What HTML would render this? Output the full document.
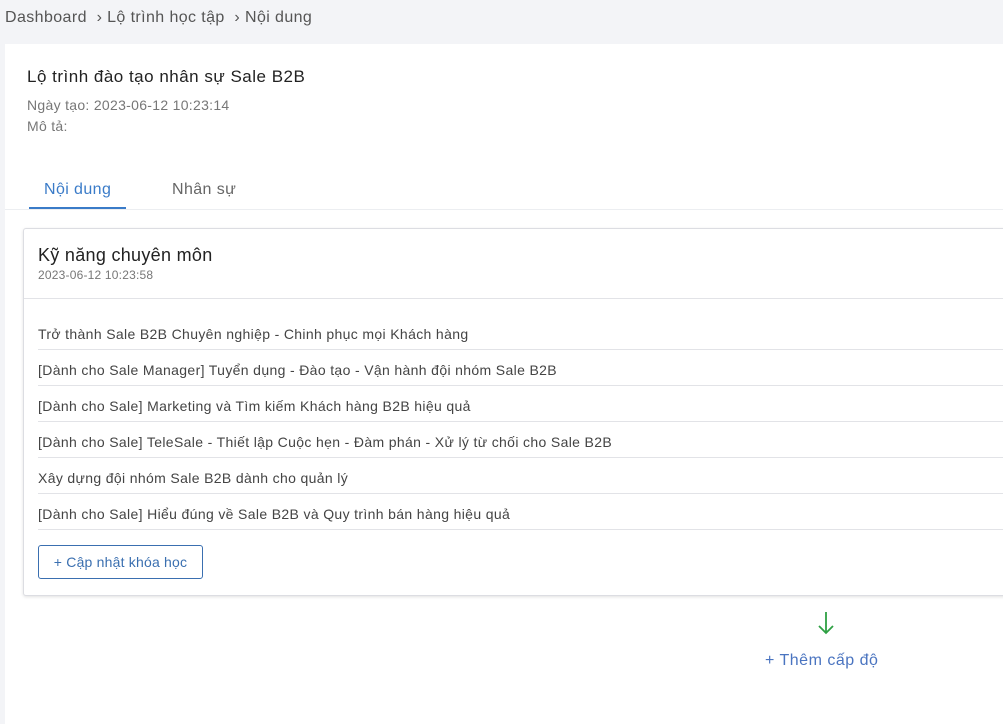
<!DOCTYPE html>
<html><head><meta charset="utf-8"><style>
body{margin:0;width:1003px;height:707px;overflow:hidden;background:#f3f4f7;font-family:"Liberation Sans","Noto Sans CJK SC",sans-serif;color:#333;position:relative}
.a{position:absolute;white-space:nowrap}
.bc{left:5px;top:9px;font-size:16px;color:#555;letter-spacing:0.4px}
.main{left:5px;top:44px;width:1010px;height:680px;background:#fff}
.inner{left:23px;top:228px;width:990px;height:366px;background:#fff;border:1px solid #dcdde2;border-radius:3px;box-shadow:0 1px 3px rgba(0,0,0,.12)}
.row{left:38px;font-size:14px;color:#444;letter-spacing:0.35px}
.ln{left:38px;width:980px;height:1px;background:#e2e3e7}
</style></head><body>
<div class="a bc">Dashboard &nbsp;›&nbsp;Lộ trình học tập &nbsp;›&nbsp;Nội dung</div>
<div class="a main"></div>
<div class="a" style="left:27px;top:67px;font-size:17px;color:#222;letter-spacing:0.5px">Lộ trình đào tạo nhân sự Sale B2B</div>
<div class="a" style="left:27px;top:97px;font-size:14px;color:#777;letter-spacing:0.3px">Ngày tạo: 2023-06-12 10:23:14</div>
<div class="a" style="left:27px;top:118px;font-size:14px;color:#777;letter-spacing:0.3px">Mô tả:</div>
<div class="a" style="left:44px;top:181px;font-size:16px;color:#3a7bc8;letter-spacing:0.4px">Nội dung</div>
<div class="a" style="left:29px;top:207px;width:97px;height:2px;background:#3a7bc8"></div>
<div class="a" style="left:172px;top:181px;font-size:16px;color:#666;letter-spacing:0.4px">Nhân sự</div>
<div class="a" style="left:5px;top:209px;width:1000px;height:1px;background:#eceef1"></div>
<div class="a inner"></div>
<div class="a" style="left:38px;top:245px;font-size:18px;color:#222;letter-spacing:0.3px">Kỹ năng chuyên môn</div>
<div class="a" style="left:38px;top:268px;font-size:12px;color:#777;letter-spacing:0.2px">2023-06-12 10:23:58</div>
<div class="a" style="left:24px;top:298px;width:990px;height:1px;background:#e2e3e7"></div>
<div class="a row" style="top:326px">Trở thành Sale B2B Chuyên nghiệp - Chinh phục mọi Khách hàng</div>
<div class="a ln" style="top:349px"></div>
<div class="a row" style="top:362px">[Dành cho Sale Manager] Tuyển dụng - Đào tạo - Vận hành đội nhóm Sale B2B</div>
<div class="a ln" style="top:385px"></div>
<div class="a row" style="top:398px">[Dành cho Sale] Marketing và Tìm kiếm Khách hàng B2B hiệu quả</div>
<div class="a ln" style="top:421px"></div>
<div class="a row" style="top:434px">[Dành cho Sale] TeleSale - Thiết lập Cuộc hẹn - Đàm phán - Xử lý từ chối cho Sale B2B</div>
<div class="a ln" style="top:457px"></div>
<div class="a row" style="top:470px">Xây dựng đội nhóm Sale B2B dành cho quản lý</div>
<div class="a ln" style="top:493px"></div>
<div class="a row" style="top:506px">[Dành cho Sale] Hiểu đúng về Sale B2B và Quy trình bán hàng hiệu quả</div>
<div class="a ln" style="top:529px"></div>
<div class="a" style="left:38px;top:545px;width:165px;height:34px;border:1px solid #3a6fb0;border-radius:3px;box-sizing:border-box;color:#3a6fb0;font-size:14px;line-height:32px;text-align:center;letter-spacing:0.2px">+ Cập nhật khóa học</div>
<svg class="a" style="left:816px;top:610px" width="20" height="26" viewBox="0 0 20 26"><path d="M10 2V23M3 16l7 7 7-7" stroke="#2ea043" stroke-width="1.8" fill="none"/></svg>
<div class="a" style="left:765px;top:652px;font-size:16px;color:#4a74c0;letter-spacing:0.5px">+ Thêm cấp độ</div>
</body></html>
